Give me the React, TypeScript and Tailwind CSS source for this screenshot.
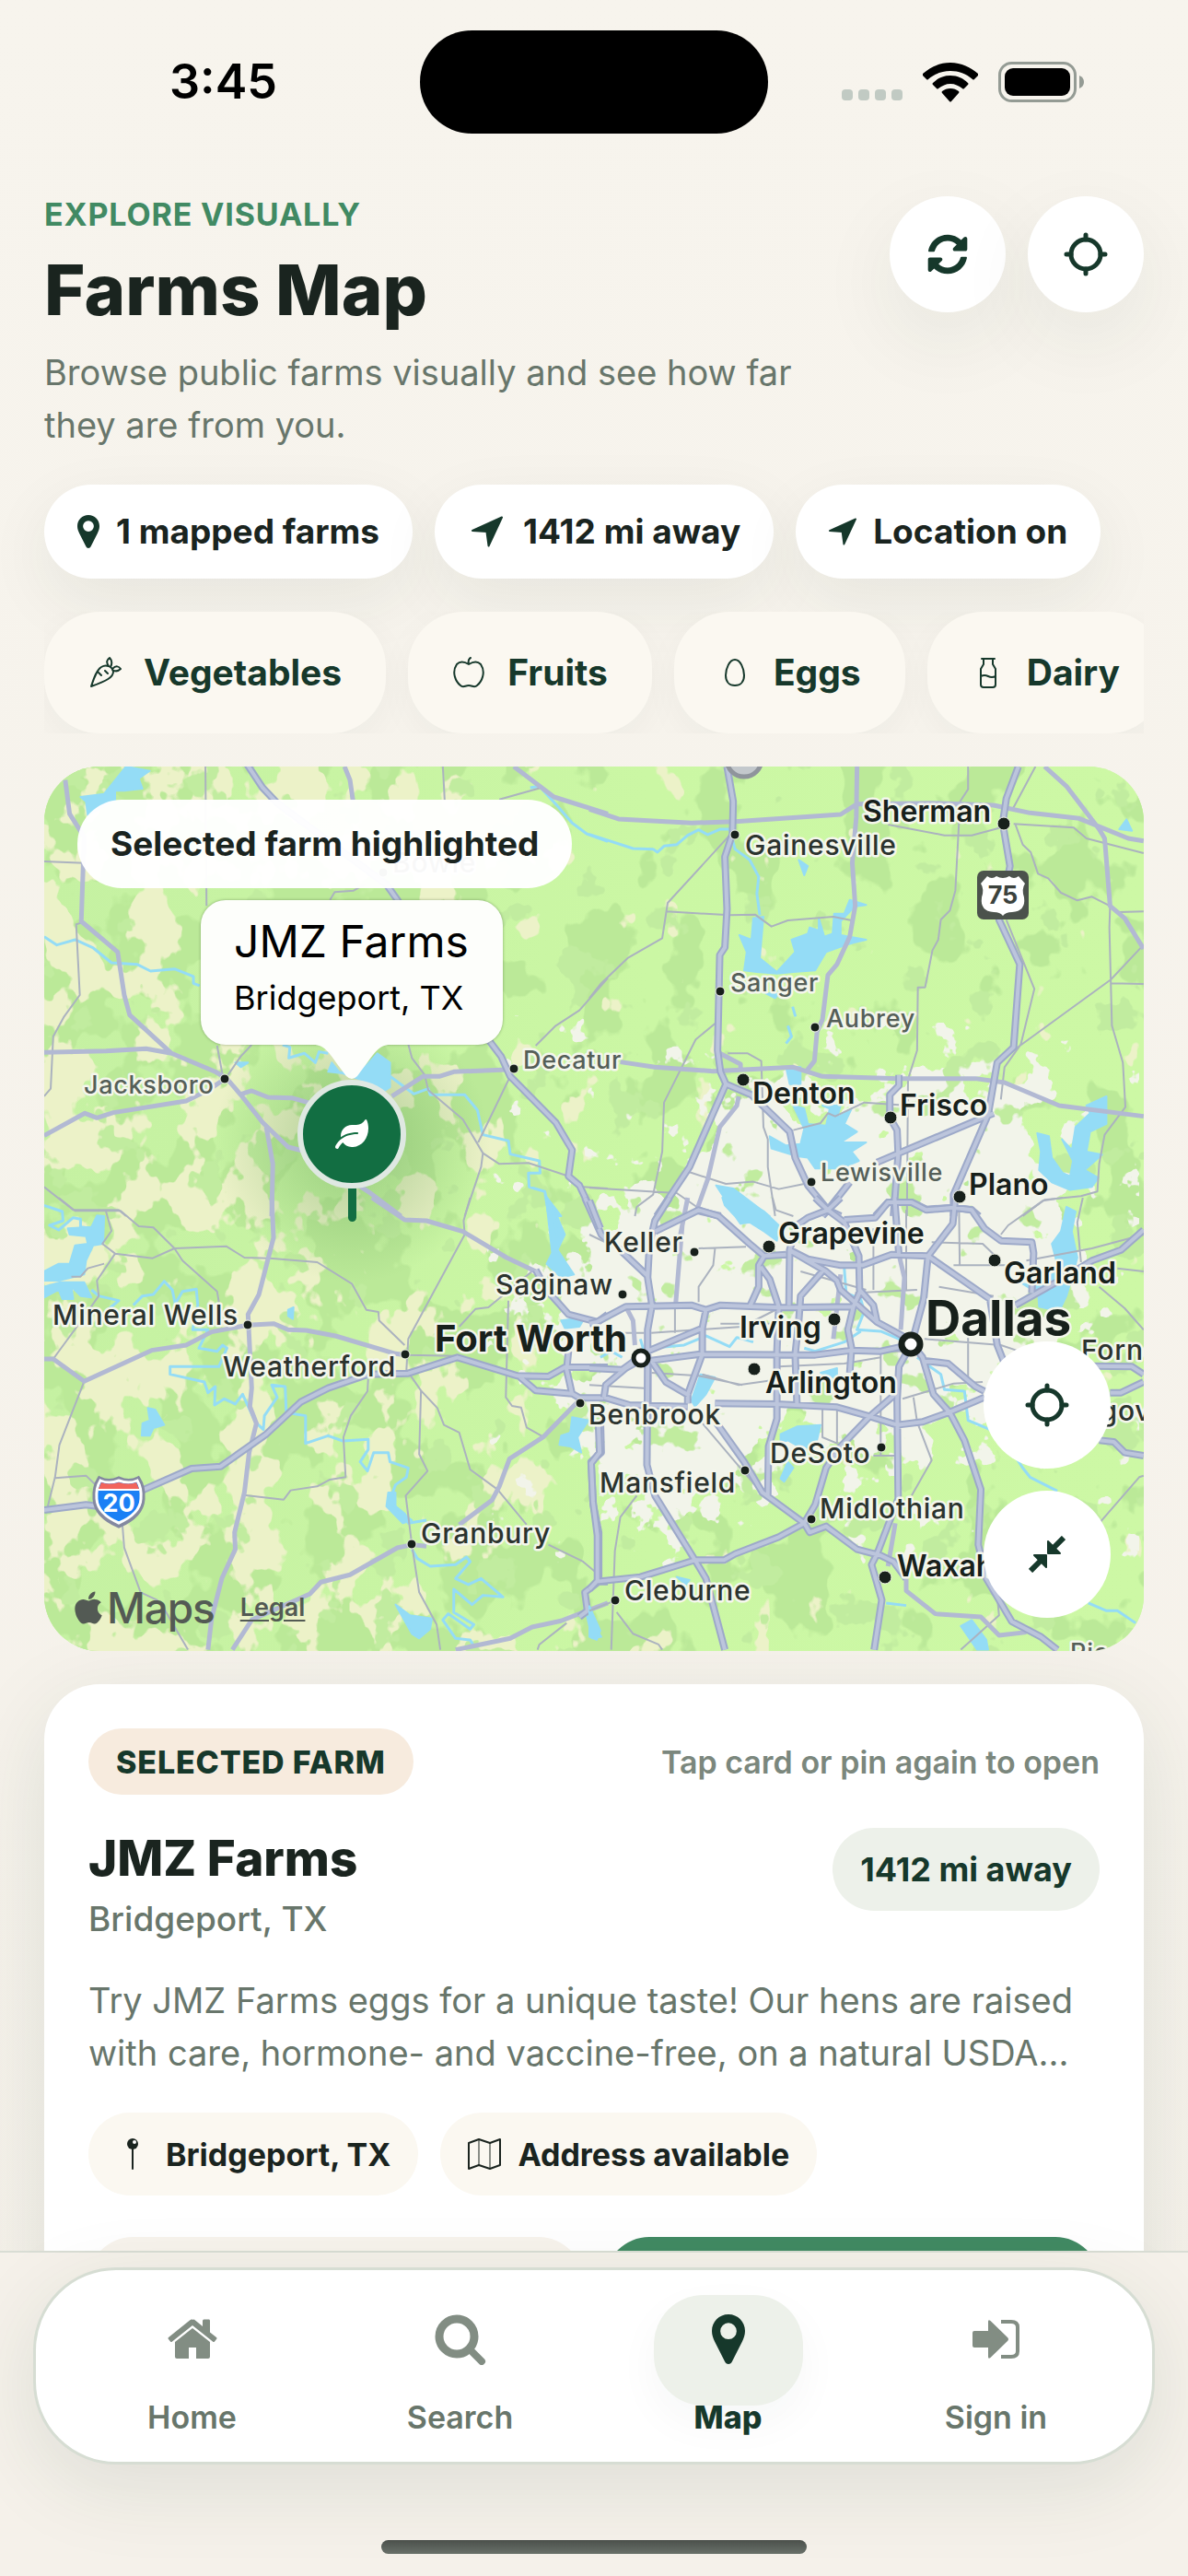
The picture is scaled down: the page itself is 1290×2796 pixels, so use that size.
import { useState } from "react";
import { FaApple, FaLeaf, FaSyncAlt } from "react-icons/fa";

interface Tile {
  x: number;
  y: number;
  highways: string;
  roads: string;
  streets: string;
  rivers: string;
  lakes: string;
}

interface City {
  name: string;
  x: number;
  y: number;
  dot?: [number, number];
  kind: "town" | "small" | "city" | "large" | "metro";
}

// The map is drawn as four tiles, each one in its own 1568x1500 space
const tiles: Tile[] = [
  {
    x: -8,
    y: -12,
    highways:
      "M578 30L620 105L660 155L960 420L990 470L1240 925L1275 980L1300 1045L1425 1195L1470 1285L1460 1370L1490 1400L1530 1500",
    roads:
      "M78 80L90 190L130 265L122 540L222 640L240 780L255 845L370 970L490 1030L520 1050L560 1105L620 1195L690 1275L740 1290L910 1420L1000 1500M20 967L190 962L300 955L370 970M20 1238L132 1165L165 1180L210 1163L410 1125L470 1090L518 1052M555 1105L590 1092L635 1113L700 1115L760 1135M630 1210L648 1330L645 1500M845 36L860 80L868 145M1310 36L1420 135L1568 190M975 1110L1060 1045L1105 1045L1145 1030L1290 1023",
    streets:
      "M463 36L466 490M20 345L130 350M122 545L108 550L118 780L75 850L45 915L38 1085L20 1110M1115 36L1120 145M1270 143L1385 105M510 1040L495 945M525 1040L560 980L590 942M1020 940L1030 985L1065 1040L1075 1090L1170 1185L1225 1295L1270 1330L1350 1327L1455 1368M1300 1045L1212 1260M1225 1295L1220 1340L1175 1500M1370 945L1425 880L1490 830L1568 725M20 1405L100 1480L225 1480L245 1500M805 470L818 445L870 440L900 420M1500 1405L1568 1410",
    rivers:
      "M20 590L55 617L105 600L155 627L205 675L275 680L312 702L378 695L430 720L430 742L447 750M675 942L695 950L692 985L735 970L765 1000L775 965L800 970M970 1045L1035 1102L1075 1085L1080 1105L1175 1105L1210 1155L1225 1235L1295 1255L1300 1298L1380 1320L1382 1360L1350 1360L1352 1405L1395 1420L1410 1500M1355 105L1380 100L1430 165L1470 220L1510 255L1568 280",
    lakes:
      "M245 36L310 50L280 75L290 108L240 115L215 115L215 145L140 195L135 150L120 135L185 125ZM810 1000L830 1030L870 1040L905 1010L935 970L970 1000L970 1080L945 1100L900 1060L840 1035L800 1030ZM545 1000L580 1000L560 1015ZM1395 1430L1440 1500L1405 1500Z",
  },
  {
    x: 592,
    y: -12,
    highways:
      "M378 36L395 150L393 255L372 330L378 500L372 625L358 650L352 960L360 1030L375 1070L275 1340L185 1500M375 1070L445 1105L550 1225L565 1310L600 1400L655 1480L690 1500M1178 36L1145 140L1135 220L1155 360L1125 535L1182 680L1165 950L1120 1000L1095 1170L1000 1430L1000 1500M850 1040L850 1075L825 1105L825 1180L845 1220L848 1300L835 1500M1110 1165L790 1325M785 1500L820 1455L885 1455L925 1478L1000 1472L1050 1480L1070 1500M715 1390L655 1480L640 1500M290 1480L360 1500",
    roads:
      "M0 175L80 207L280 220L400 215L690 192L735 158L940 155L1110 162L1210 187L1345 205L1480 270L1522 278M735 36L733 200L722 350L730 490L715 590L680 680L655 715L640 860L625 900L618 995L598 1025M1250 36L1310 100L1400 240L1415 270L1430 490L1470 530L1522 630M85 998L180 1015L340 1028L560 1015L640 1045L850 1052L1060 1052L1140 1065L1290 1140L1522 1175M410 1110L405 1140L358 1210L325 1380L295 1480M358 970L415 1005L415 1030M0 1450L15 1500",
    streets:
      "M385 260L215 480L200 595L105 660L30 745L0 790M212 508L385 520L455 518L500 557L545 537L670 525L720 537M348 870L292 925L205 1130L200 1290L175 1430L130 1470L125 1500M1040 36L1040 110L1018 150L1005 440L990 505L965 535L958 600L942 635L922 755L902 755L900 960L875 1055L872 1500M820 225L975 260L1050 260L1130 235M1165 223L1330 235L1365 270L1522 318M1170 225L1190 290L1212 315L1232 385L1260 400L1295 447L1340 472L1380 460L1430 490L1455 510L1522 508M1430 490L1428 560L1435 880L1465 1000L1472 1145L1415 1235L1400 1330L1395 1420L1350 1435L1250 1447L1190 1500M1145 535L1222 760L1185 940L1140 1015L1130 1120M1165 960L1432 730L1515 625M1432 742L1522 744M380 970L435 970L472 995L478 1210L490 1250L490 1340L510 1500M560 1220L635 1197L655 1165L675 1175L755 1130L850 1138M0 1408L240 1425L295 1470M275 1357L375 1395L450 1388L520 1412L590 1395M1225 36L1160 180",
    rivers:
      "M0 257L120 303L175 305L187 315L205 295L240 290L270 260L300 242L325 258L360 240L385 240L400 305L440 340L465 395L460 450L468 520M545 880L555 915L540 938M558 818L566 850",
    lakes:
      "M450 530L478 525L468 660L515 705L565 640L555 600L600 580L605 560L630 570L630 530L645 590L668 580L672 515L700 515L715 470L760 487L728 492L690 540L690 585L760 600L725 610L685 625L650 640L620 700L560 705L515 710L460 705L425 700L432 640L412 585L445 600ZM485 775L520 775L510 790ZM560 1140L590 1150L600 1200L650 1205L660 1150L640 1140L690 1140L680 1180L720 1150L700 1200L735 1225L690 1260L760 1260L720 1290L740 1320L690 1345L620 1345L600 1310L570 1305L500 1280L495 1240L540 1270L580 1265L590 1215ZM540 1015L580 1015L580 1070L550 1070ZM348 1400L395 1410L495 1500L440 1500L370 1440ZM1230 1230L1262 1240L1270 1310L1300 1360L1320 1370L1328 1320L1298 1250L1325 1285L1335 1210L1375 1165L1365 1140L1420 1110L1420 1200L1375 1225L1365 1290L1408 1300L1360 1350L1398 1375L1380 1405L1320 1415L1270 1390L1235 1350L1240 1290ZM1455 240L1475 208L1490 245ZM575 340L600 360L590 390Z",
  },
  {
    x: -8,
    y: 468,
    highways:
      "M20 1017L135 1000L170 1005L295 950L425 882L505 875L630 770L725 665L800 620L910 575L1020 572L1155 520L1320 580L1405 582L1450 552L1568 552M1325 582L1370 628L1470 638L1490 652L1568 652M1505 0L1550 120L1568 140M1460 500L1455 560L1470 640M1548 740L1550 830L1522 860L1528 1000L1543 1090L1543 1250L1505 1285L1512 1345L1490 1365M1543 1250L1568 1250M1370 235L1400 300L1460 380L1540 405L1568 380",
    roads:
      "M920 0L1010 72L1070 75L1170 110L1290 195L1370 240M645 0L650 130L610 315L580 380L590 620L585 680L603 735L583 830L570 960L543 1090L545 1145L508 1240L480 1370L470 1472M20 525L45 525L130 598L315 497L410 480L480 437L580 415L650 410L690 430L740 432L820 450L985 508L1012 512M537 1472L590 1375L750 1290L780 1252L860 1228L990 1140L1030 1130L1070 1135M1160 1065L1250 985L1270 940L1298 850L1390 780L1485 665M1150 1472L1300 1435L1360 1398L1440 1378L1500 1350L1568 1320",
    streets:
      "M60 0L105 43L230 43L280 93L320 97L378 165L520 158L570 195L640 197L770 210L865 280L905 365L938 372L940 400L1010 480M378 165L318 197L215 182L180 150L205 108L190 45M215 182L165 270L170 320L110 420L45 525M378 165L400 205L495 305L500 340M185 215L140 230L120 257L95 257M130 598L62 805L50 910L30 1005M50 913L135 905L170 945M235 1065L240 1140L285 1285L330 1310L350 1340L415 1472M1190 0L1172 75L1175 120L1020 460L1015 560L1055 628L1050 835L1073 890L1013 970L1030 1130L1050 1285L1098 1390L1108 1472M1020 512L1150 515M1055 628L1100 685L1118 740L1160 765L1190 885L1265 950L1345 1065M1405 1130L1500 1185L1540 1225M910 590L908 630L862 710L842 780L848 910L805 918L770 940L697 953L678 983L568 968M1160 420L1205 362L1240 357L1365 235M1295 335L1288 650L1305 678L1330 683L1345 748L1390 778M1455 1385L1380 1455L1375 1472",
    rivers:
      "M265 350L290 320L320 315L350 272L372 300L380 345L400 305L438 298L442 350L428 430L470 430L445 490L495 500L510 480L522 490L500 550L366 550L366 575L460 600L470 635L490 615L488 675L515 655L545 672L565 640L600 730L622 755L625 710L660 650L645 610L682 615L685 700L738 710L738 800L800 775L840 792L910 787L910 820L888 860L908 890L925 830L965 830L970 860L1020 880L1015 910L985 935L968 990L1010 1030L1020 1060L1070 1050M1030 1145L1045 1175L1080 1200L1150 1195L1180 1170L1190 1185L1150 1240L1185 1260L1220 1240L1280 1300L1225 1295L1195 1325L1145 1275L1145 1350L1200 1390L1190 1405L1130 1355L1115 1375L1150 1435L1190 1440L1200 1460M20 25L70 45L72 75L35 90L60 105L100 65L120 70L120 95L150 100M1400 0L1420 60L1430 130M150 300L170 320L225 335L200 360",
    lakes:
      "M165 58L185 60L182 150L155 155L135 205L130 250L60 270L20 270L20 240L60 215L90 215L105 155L140 150L135 125L90 120L85 100L150 95ZM20 290L65 275L130 275L150 325L120 320L95 290L100 330L70 330L60 300L20 325ZM305 685L325 690L350 740L320 750L310 775L288 775L290 735L310 725ZM1400 20L1425 50L1450 120L1430 170L1455 215L1475 250L1440 260L1400 215L1415 180ZM690 365L705 357L703 395L690 385ZM1470 715L1515 725L1485 780L1495 830L1465 810L1435 805L1440 775L1465 765ZM985 1325L1025 1360L1085 1370L1080 1405L1050 1435L1030 1420ZM1440 400L1505 390L1490 420L1450 425ZM1510 1360L1550 1430L1525 1435ZM965 960L985 960L985 1010L1030 1050L1005 1060L960 1005Z",
  },
  {
    x: 592,
    y: 468,
    highways:
      "M0 10L30 100M220 0L180 75L165 150L160 260L172 350L160 430L160 530L158 870L180 970L290 1180L320 1240L372 1472M80 165L160 255M180 110L300 40L355 60L440 150L480 190L540 185M548 170L650 240L680 270L690 300L790 405L860 450L885 475M0 410L20 405L100 355L280 350L320 365L360 350L525 358L725 355M620 0L655 40L700 80L740 190L742 300L780 350L790 405M690 0L655 40L600 65L570 90L550 170L548 350M480 190L465 220L465 290L440 355M470 225L495 265L520 355L515 500L515 720L492 810L490 970M700 72L785 65L820 15L885 15L925 40L1000 32L1050 40L1085 100L1130 140L1215 145L1220 180L1215 310M838 0L850 185M1005 0L998 85L930 190L918 330L885 475L850 550L845 660L848 980L790 1160L775 1195L803 1310L782 1472M550 170L600 200L690 220L750 220L830 185L930 190L1100 330L1120 480L1140 540M1522 105L1460 170L1380 205L1290 270L1170 350M640 240L580 320L575 400L565 510L570 670M745 300L725 355L710 430L720 490L715 570M170 530L300 510L620 512L720 497L800 500L885 478M0 555L90 560L160 500L310 425L320 365M310 425L310 510L270 640L270 670M170 530L210 600L275 645M345 670L515 672L680 682L770 712L845 740L915 730L990 698L1085 650M885 475L915 520L945 640L990 700L1030 790L1075 950L1068 1130L1090 1240L1160 1380L1240 1430L1285 1472M915 530L985 540L1060 615L1085 630M1380 548L1490 550L1522 575M1430 635L1460 635L1522 600M1400 790L1440 795L1470 830L1522 840M840 640L770 712L690 810L650 880L620 1000L590 1060M350 735L425 860L475 960L590 1060L605 1090L650 1070L735 1145L800 1165L835 1185L870 1240M590 1060L520 1105L400 1160L370 1180L290 1180L140 1235L20 1250L0 1275M25 740L28 830L5 865L10 990L22 1100L22 1250M40 650L45 610L100 555L145 525M40 650L110 675L270 680",
    roads:
      "M870 1240L870 1280L950 1355L1075 1365L1125 1425L1200 1415M255 90L237 345M850 185L865 260L855 430M165 530L165 720M270 0L250 120M100 355L120 400L125 480M840 1060L820 1200M670 460L690 250",
    streets:
      "M503 0L512 40L560 60M0 120L70 160L115 165M345 165L340 220L300 290L300 340M1015 30L1017 220M300 165L430 160M940 145L1080 150L1115 190M1000 220L1180 220M960 290L1110 320M730 310L900 300M1040 440L1040 600M920 460L1130 480L1180 500M870 40L870 300M310 575L410 610L500 595M170 570L300 580L420 610M640 670L640 780L680 800L680 680M800 510L800 840M890 650L900 730L940 855L885 970M860 655L1000 605L1080 600M1130 120L1150 90L1245 10L1300 0M1355 0L1340 80L1350 210M1200 205L1380 165L1522 120M1400 290L1470 360L1522 430M1400 1060L1510 910L1522 905M300 720L400 860L480 970M130 970L85 1040L70 1150L60 1472M75 1350L120 1420L190 1455L200 1472M0 1345L75 1310M170 440L420 420L520 360M0 440L150 440M235 340L235 440M360 410L520 410M0 610L150 620M1020 1472L1125 1360L1120 1300M640 500L900 500M1450 230L1522 240M780 840L840 840M520 550L700 540L800 520M780 100L780 300M580 240L760 300",
    rivers:
      "M700 230L705 310L745 330L755 370L735 430L800 435L870 470M170 490L260 480L320 450L385 485L405 455L450 470M745 435L700 470L620 500L590 490M900 520L965 575L975 625L1030 630L1040 725L1130 770L1190 880L1210 910L1285 955M1370 1320L1420 1345L1450 1345L1500 1385M815 1320L870 1328M30 520L60 500L90 520M140 460L150 500",
    lakes:
      "M365 0L410 0L480 45L520 90L515 140L480 110L440 80L415 85L400 60L372 25ZM1310 30L1335 45L1325 110L1340 195L1330 240L1310 320L1290 370L1235 355L1230 270L1290 240L1270 150L1295 110ZM525 770L570 745L635 740L625 790L590 820L545 790L525 800ZM305 575L345 585L320 640L290 680L280 660ZM1050 1375L1090 1440L1095 1472L1065 1472L1020 1395ZM635 570L680 555L680 590ZM0 1330L30 1410L20 1440L0 1430ZM545 860L560 880L535 925L525 915ZM240 1235L275 1245L265 1260ZM1190 280L1235 290L1230 310Z",
  },
];

const cities: City[] = [
  { name: "Bowie", x: 378, y: 115, dot: [368, 115], kind: "town" },
  { name: "Sherman", x: 889, y: 60, dot: [1042, 62], kind: "city" },
  { name: "Gainesville", x: 761, y: 96, dot: [750, 74], kind: "town" },
  { name: "Sanger", x: 745, y: 244, dot: [734, 244], kind: "small" },
  { name: "Aubrey", x: 849, y: 283, dot: [837, 283], kind: "small" },
  { name: "Denton", x: 769, y: 366, dot: [759, 340], kind: "city" },
  { name: "Frisco", x: 929, y: 379, dot: [919, 381], kind: "city" },
  { name: "Lewisville", x: 843, y: 450, dot: [833, 451], kind: "small" },
  { name: "Plano", x: 1004, y: 465, dot: [994, 467], kind: "city" },
  { name: "Decatur", x: 520, y: 328, dot: [510, 328], kind: "small" },
  { name: "Jacksboro", x: 43, y: 355, dot: [196, 339], kind: "small" },
  { name: "Mineral Wells", x: 9, y: 606, dot: [221, 606], kind: "town" },
  { name: "Weatherford", x: 194, y: 662, dot: [392, 638], kind: "town" },
  { name: "Fort Worth", x: 424, y: 635, kind: "large" },
  { name: "Saginaw", x: 490, y: 573, dot: [628, 573], kind: "town" },
  { name: "Benbrook", x: 591, y: 714, dot: [582, 691], kind: "town" },
  { name: "Granbury", x: 409, y: 843, dot: [399, 844], kind: "town" },
  { name: "Keller", x: 608, y: 527, dot: [706, 527], kind: "town" },
  { name: "Grapevine", x: 797, y: 518, dot: [787, 521], kind: "city" },
  { name: "Garland", x: 1042, y: 561, dot: [1032, 536], kind: "city" },
  { name: "Irving", x: 755, y: 620, dot: [858, 600], kind: "city" },
  { name: "Dallas", x: 957, y: 618, kind: "metro" },
  { name: "Forney", x: 1126, y: 644, kind: "town" },
  { name: "Seagoville", x: 1090, y: 710, kind: "town" },
  { name: "Arlington", x: 783, y: 680, dot: [771, 654], kind: "city" },
  { name: "DeSoto", x: 788, y: 756, dot: [909, 739], kind: "town" },
  { name: "Mansfield", x: 603, y: 788, dot: [761, 764], kind: "town" },
  { name: "Midlothian", x: 842, y: 816, dot: [833, 817], kind: "town" },
  { name: "Waxahachie", x: 926, y: 879, dot: [913, 880], kind: "city" },
  { name: "Cleburne", x: 630, y: 905, dot: [620, 905], kind: "town" },
  { name: "Rice", x: 1114, y: 971, kind: "small" },
];

const cityStyles = {
  small: "fill-[#555f58] text-[27px] font-medium tracking-wide",
  town: "fill-[#2b332e] text-[30px] font-medium tracking-wide",
  city: "fill-[#17201b] text-[32px] font-semibold",
  large: "fill-[#17201b] text-[40px] font-bold",
  metro: "fill-[#17201b] text-[53px] font-bold",
};

function MapCanvas() {
  return (
    <svg
      className="absolute inset-0 h-full w-full"
      viewBox="0 0 1194 960"
      preserveAspectRatio="xMidYMid slice"
      role="img"
      aria-label="Map of the Dallas and Fort Worth area"
    >
      <defs>
        <linearGradient id="base">
          <stop offset="0" stopColor="#c5f1a2" />
          <stop offset="0.55" stopColor="#cbf7a4" />
          <stop offset="1" stopColor="#cdf8a5" />
        </linearGradient>
        <linearGradient id="west">
          <stop offset="0" stopColor="#fff" stopOpacity="1" />
          <stop offset="0.3" stopColor="#fff" stopOpacity="0.85" />
          <stop offset="0.55" stopColor="#fff" stopOpacity="0.3" />
          <stop offset="1" stopColor="#fff" stopOpacity="0.1" />
        </linearGradient>
        <radialGradient id="halo">
          <stop offset="0" stopColor="#5f9c50" stopOpacity="0.45" />
          <stop offset="1" stopColor="#5f9c50" stopOpacity="0" />
        </radialGradient>
        {/* noise cut at a threshold gives the ragged field edges */}
        <filter id="woods" x="0" y="0" width="1" height="1" colorInterpolationFilters="sRGB">
          <feTurbulence type="fractalNoise" baseFrequency="0.014 0.012" numOctaves="4" seed="8" />
          <feComposite in2="SourceGraphic" operator="arithmetic" k2="1" k3="0.14" />
          <feColorMatrix values="0 0 0 0 0.735 0 0 0 0 0.915 0 0 0 0 0.597 0 0 0 30 -18.2" />
        </filter>
        <filter id="fields" x="0" y="0" width="1" height="1" colorInterpolationFilters="sRGB">
          <feTurbulence type="fractalNoise" baseFrequency="0.02 0.016" numOctaves="4" seed="21" />
          <feComposite in2="SourceGraphic" operator="arithmetic" k2="1" k3="0.3" />
          <feColorMatrix values="0 0 0 0 0.925 0 0 0 0 0.949 0 0 0 0 0.784 0 0 0 30 -23.900" />
        </filter>
        <filter id="urban" x="-0.1" y="-0.1" width="1.2" height="1.2" colorInterpolationFilters="sRGB">
          <feGaussianBlur in="SourceGraphic" stdDeviation="34" result="soft" />
          <feTurbulence type="fractalNoise" baseFrequency="0.03" numOctaves="4" seed="5" />
          <feComposite in2="soft" operator="arithmetic" k2="1" k3="0.5" />
          <feColorMatrix values="0 0 0 0 0.949 0 0 0 0 0.957 0 0 0 0 0.918 0 0 0 30 -21.500" />
        </filter>
        <filter id="parks" x="0" y="0" width="1" height="1" colorInterpolationFilters="sRGB">
          <feTurbulence type="fractalNoise" baseFrequency="0.02" numOctaves="4" seed="33" />
          <feColorMatrix values="0 0 0 0 0.757 0 0 0 0 0.925 0 0 0 0 0.624 0 0 0 30 -19.500" />
        </filter>
      </defs>

      <rect width="1194" height="960" fill="url(#base)" />
      <rect width="1194" height="960" fill="url(#west)" filter="url(#woods)" />
      <rect width="1194" height="960" fill="url(#west)" filter="url(#fields)" />
      <g fill="#fff" filter="url(#urban)">
        <path d="M600 470L700 440L740 350L800 330L850 400L920 330L1050 320L1090 430L1130 520L1110 640L1000 690L930 760L800 700L760 800L640 820L600 700L540 660L560 560Z" />
      </g>
      <rect width="1194" height="960" filter="url(#parks)" />
      <circle cx="334" cy="410" r="150" fill="url(#halo)" />

      {tiles.map((tile) => (
        <g
          key={tile.highways}
          transform={`translate(${tile.x} ${tile.y}) scale(0.3954 0.3333)`}
          fill="none"
          strokeLinejoin="round"
          className="[&_path]:[vector-effect:non-scaling-stroke]"
        >
          <path d={tile.lakes} fill="#94dcf6" stroke="#94dcf6" strokeWidth="2" />
          <path d={tile.rivers} stroke="#94dcf6" strokeWidth="3" />
          <path d={tile.streets} stroke="#abb2bf" strokeWidth="2" />
          <path d={tile.roads} stroke="#b2b9d3" strokeWidth="5" />
          <path d={tile.highways} stroke="#9da9c9" strokeWidth="8" />
          <path d={tile.highways} stroke="#bcc5dc" strokeWidth="4" />
        </g>
      ))}

      <circle cx="760" cy="-8" r="19" fill="#c3c8cc" stroke="#8f949c" strokeWidth="5" />

      {cities.map((city) => (
        <g key={city.name}>
          {city.dot && (
            <circle
              cx={city.dot[0]}
              cy={city.dot[1]}
              r={city.kind === "city" ? 7 : 5}
              fill="#17201b"
              stroke="#f4f6ec"
              strokeWidth="1"
            />
          )}
          <text
            x={city.x}
            y={city.y}
            className={cityStyles[city.kind]}
            stroke="#f4f6ec"
            strokeWidth="5"
            strokeLinejoin="round"
            paintOrder="stroke"
          >
            {city.name}
          </text>
        </g>
      ))}
      <circle cx="648" cy="642" r="8" fill="#fff" stroke="#17201b" strokeWidth="5" />
      <circle cx="941" cy="627" r="10" fill="#fff" stroke="#17201b" strokeWidth="7" />

      {/* US 75 */}
      <rect x="1013" y="113" width="56" height="53" rx="7" fill="#4b524c" />
      <path
        d="M1024 119Q1029 123 1034 119Q1041 123 1048 119Q1053 123 1058 119L1065 127Q1061 133 1064 142Q1066 157 1051 158Q1044 158 1041 162Q1038 158 1031 158Q1016 157 1018 142Q1021 133 1017 127Z"
        fill="#fff"
      />
      <text x="1041" y="149" textAnchor="middle" className="fill-[#3b423d] text-[27px] font-bold">
        75
      </text>

      {/* Interstate 20 */}
      <path
        d="M60 773Q70 778 81 773Q92 778 102 773Q108 782 107 795Q106 813 81 824Q56 813 55 795Q54 782 60 773Z"
        fill="#1a80f5"
        stroke="#8489a0"
        strokeWidth="5"
      />
      <path
        d="M61 775Q70 779 81 775Q92 779 101 775Q106 783 105 795Q104 811 81 821Q58 811 57 795Q56 783 61 775Z"
        fill="#1a80f5"
        stroke="#fff"
        strokeWidth="3"
      />
      <path d="M62 777Q70 780 81 777Q92 780 100 777L103 784H59Z" fill="#f2645c" />
      <path d="M59 785H103" stroke="#fff" strokeWidth="2" />
      <text x="81" y="809" textAnchor="middle" className="fill-white text-[27px] font-bold">
        20
      </text>
    </svg>
  );
}

/* icons */
function PinIcon({ className }: { className?: string }) {
  return (
    <svg viewBox="0 0 24 36" className={className} fill="currentColor" aria-hidden="true">
      <path
        fillRule="evenodd"
        d="M12 0C5.200 0 0 5.300 0 12C0 15 1 17.500 2.200 20L9.300 34C10.300 36.600 13.700 36.600 14.700 34L21.800 20C23 17.500 24 15 24 12C24 5.300 18.800 0 12 0ZM12 6.200A5.900 5.900 0 1 1 12 18A5.900 5.900 0 1 1 12 6.200Z"
      />
    </svg>
  );
}

function ArrowIcon({ className }: { className?: string }) {
  return (
    <svg viewBox="2 2 33 32" className={className} fill="currentColor" stroke="currentColor" strokeWidth="2" strokeLinejoin="round" aria-hidden="true">
      <path d="M3 17L34 3L20 33L18 18Z" />
    </svg>
  );
}

function CrosshairIcon() {
  return (
    <svg viewBox="0 0 48 48" className="size-12" fill="none" stroke="currentColor" strokeWidth="5" strokeLinecap="round" aria-hidden="true">
      <circle cx="24" cy="24" r="16" />
      <path d="M24 3V8M24 40V45M3 24H8M40 24H45" />
    </svg>
  );
}

function CollapseIcon() {
  return (
    <svg viewBox="0 0 40 40" className="size-10" fill="currentColor" stroke="currentColor" strokeLinejoin="round" aria-hidden="true">
      <path strokeWidth="2" d="M21 6V19H34ZM19 34V21H6Z" />
      <path strokeWidth="6" d="M26 14L38 2M14 26L2 38" />
    </svg>
  );
}

function CarrotIcon() {
  return (
    <svg viewBox="0 0 36 36" className="size-9" fill="none" stroke="currentColor" strokeWidth="2" strokeLinecap="round" strokeLinejoin="round" aria-hidden="true">
      <path d="M3 33C6 24 9 15 14 12C19 9 26 11 27 17C27 23 20 27 3 33ZM11 18L14 21M18 16L21 19M22 11C19 7 20 4 23 2C26 5 26 8 24 12M26 14C30 10 33 11 35 14C32 17 29 17 26 15" />
    </svg>
  );
}

function AppleIcon() {
  return (
    <svg viewBox="0 0 36 36" className="size-9" fill="none" stroke="currentColor" strokeWidth="2" strokeLinecap="round" strokeLinejoin="round" aria-hidden="true">
      <path d="M18 9C13 6 8 6 5 9C-1 18 4 28 9 32C12 35 14 32 18 32C22 32 24 35 27 32C32 28 37 18 31 9C28 6 23 6 18 9ZM18 9C17 5 18 3 20 2" />
    </svg>
  );
}

function EggIcon() {
  return (
    <svg viewBox="0 0 36 36" className="size-9" fill="none" stroke="currentColor" strokeWidth="2" aria-hidden="true">
      <path d="M18 4C12 4 8 14 8 21C8 28 12 32 18 32C24 32 28 28 28 21C28 14 24 4 18 4Z" />
    </svg>
  );
}

function MilkIcon() {
  return (
    <svg viewBox="0 0 36 36" className="size-9" fill="none" stroke="currentColor" strokeWidth="2" strokeLinecap="round" strokeLinejoin="round" aria-hidden="true">
      <path d="M11 3H25M13 3V9L10 14V31Q10 34 13 34H23Q26 34 26 31V14L23 9V3M10 22Q14 20 18 22T26 22" />
    </svg>
  );
}

function PushpinIcon() {
  return (
    <svg viewBox="0 0 36 36" className="size-9" aria-hidden="true">
      <path d="M18 9V34" stroke="currentColor" strokeWidth="2" strokeLinecap="round" />
      <circle cx="18" cy="7" r="6" fill="currentColor" />
      <circle cx="20" cy="5" r="2" fill="#fff" />
    </svg>
  );
}

function FoldedMapIcon() {
  return (
    <svg viewBox="0 0 36 36" className="size-9" fill="none" stroke="currentColor" strokeWidth="2" strokeLinejoin="round" aria-hidden="true">
      <path d="M1 6L12 2L24 6L35 2V30L24 34L12 30L1 34Z" />
      <path strokeWidth="1" d="M12 2V30M24 6V34" />
    </svg>
  );
}

function HomeIcon() {
  return (
    <svg viewBox="0 0 54 54" className="size-[54px]" fill="currentColor" aria-hidden="true">
      <path d="M27 15L46 30V46Q46 48 44 48H31V36H23V48H10Q8 48 8 46V30Z" />
      <path d="M27 6Q28.500 5 30 6.500L38 13V7Q38 5.500 39.500 5.500H45Q46 5.500 46 7V19.500L53 25Q54 26 53 27L51 29.500Q50 30.500 49 29.500L27 12L5 29.500Q4 30.500 3 29.500L1 27Q0 26 1 25L24 6.500Q25.500 5 27 5.500Z" />
    </svg>
  );
}

function SearchIcon() {
  return (
    <svg viewBox="0 0 56 56" className="size-14" fill="none" stroke="currentColor" strokeLinecap="round" aria-hidden="true">
      <circle cx="24" cy="25" r="19" strokeWidth="9" />
      <path d="M39 40L51 52" strokeWidth="8" />
    </svg>
  );
}

function SignInIcon() {
  return (
    <svg viewBox="0 0 54 54" className="size-[54px]" aria-hidden="true">
      <path d="M3 18Q1 18 1 20V34Q1 36 3 36H18V46Q18 49 20.500 47L39 29Q41 27 39 25L20.500 7Q18 5 18 8V18Z" fill="currentColor" />
      <path d="M32 8H43Q50 8 50 14V40Q50 46 43 46H32" fill="none" stroke="currentColor" strokeWidth="4" />
    </svg>
  );
}

const stats = [
  { label: "1 mapped farms", icon: <PinIcon className="h-9 w-6" /> },
  { label: "1412 mi away", icon: <ArrowIcon className="size-[42px] p-1" /> },
  { label: "Location on", icon: <ArrowIcon className="size-[30px]" /> },
];

const categories = [
  { label: "Vegetables", icon: <CarrotIcon /> },
  { label: "Fruits", icon: <AppleIcon /> },
  { label: "Eggs", icon: <EggIcon /> },
  { label: "Dairy", icon: <MilkIcon /> },
];

const tabs = [
  { label: "Home", icon: <HomeIcon /> },
  { label: "Search", icon: <SearchIcon /> },
  { label: "Map", icon: <PinIcon className="h-[54px] w-9" /> },
  { label: "Sign in", icon: <SignInIcon /> },
];

function StatusBar() {
  return (
    <div className="grid h-[177px] shrink-0 grid-cols-[1fr_378px_1fr] pt-[33px]">
      <div className="flex h-28 items-center pl-[184px] text-[52px] font-semibold text-black">3:45</div>
      <div className="h-28 rounded-full bg-black" />
      <div className="flex h-28 items-center justify-end gap-[22px] pr-28">
        <div className="flex gap-[6px] pt-[28px]">
          <span className="h-3 w-3 rounded-[4px] bg-[#c1cac3]" />
          <span className="h-3 w-3 rounded-[4px] bg-[#c1cac3]" />
          <span className="h-3 w-3 rounded-[4px] bg-[#c1cac3]" />
          <span className="h-3 w-3 rounded-[4px] bg-[#c1cac3]" />
        </div>
        <svg viewBox="0 0 60 43" className="h-[43px] w-[60px]" aria-hidden="true">
          <path d="M30 0C42 0 52 5 60 12Q61 13 60 14L56 18Q55 19 54 18C47 12 39 9 30 9S13 12 6 18Q5 19 4 18L0 14Q-1 13 0 12C8 5 18 0 30 0Z" />
          <path d="M30 14C38 14 44 17 49 22Q50 23 49 24L45 28Q44 29 43 28C39 25 35 23 30 23S21 25 17 28Q16 29 15 28L11 24Q10 23 11 22C16 17 22 14 30 14Z" />
          <path d="M30 28C34 28 36 29 39 31Q40 32 39 33L31 42Q30 43 29 42L21 33Q20 32 21 31C24 29 26 28 30 28Z" />
        </svg>
        <svg viewBox="0 0 94 44" className="h-11 w-[94px]" aria-hidden="true">
          <rect x="1.500" y="1.500" width="82" height="41" rx="13" fill="none" stroke="#949b94" strokeWidth="3" />
          <rect x="7" y="7" width="71" height="30" rx="9" />
          <path d="M88 15Q93 17 93 22T88 29Z" fill="#949b94" />
        </svg>
      </div>
    </div>
  );
}

function RoundButton({ label, className, children }: { label: string; className: string; children: React.ReactNode }) {
  return (
    <button
      type="button"
      aria-label={label}
      className={`flex shrink-0 items-center justify-center rounded-full bg-white text-[#16382b] ${className}`}
    >
      {children}
    </button>
  );
}

export default function App() {
  const [activeTab, setActiveTab] = useState("Map");

  return (
    <div className="flex h-screen w-full flex-col overflow-hidden bg-linear-to-b from-[#f7f4ed] to-[#f5f1ea] font-['Inter',sans-serif] text-[#1a241f]">
      <StatusBar />

      <main className="flex min-h-0 flex-1 flex-col gap-9 overflow-hidden px-12 pt-9">
        {/* Header */}
        <header className="flex shrink-0 items-start justify-between gap-9">
          <div className="flex max-w-[830px] flex-col gap-3">
            <p className="text-[34px] leading-10 font-bold tracking-wide text-[#418a63]">EXPLORE VISUALLY</p>
            <h1 className="text-[76px] leading-[99px] font-extrabold">Farms Map</h1>
            <p className="text-[38px] leading-[57px] text-[#68766b]">
              Browse public farms visually and see how far they are from you.
            </p>
          </div>
          <div className="flex gap-6">
            <RoundButton label="Refresh" className="size-[126px] shadow-[0_30px_90px_rgba(22,56,43,0.07)]">
              <FaSyncAlt className="size-[44px]" />
            </RoundButton>
            <RoundButton label="Locate me" className="size-[126px] shadow-[0_30px_90px_rgba(22,56,43,0.07)]">
              <CrosshairIcon />
            </RoundButton>
          </div>
        </header>

        {/* Stats */}
        <ul className="flex shrink-0 gap-6">
          {stats.map((stat) => (
            <li
              key={stat.label}
              className="flex h-[102px] items-center gap-[18px] rounded-full bg-white px-9 text-[37px] font-bold whitespace-nowrap shadow-[0_24px_72px_rgba(22,56,43,0.07)]"
            >
              <span className="text-[#16382b]">{stat.icon}</span>
              {stat.label}
            </li>
          ))}
        </ul>

        {/* Categories */}
        <div className="flex shrink-0 gap-6 overflow-hidden">
          {categories.map((category) => (
            <button
              key={category.label}
              type="button"
              className="flex h-[132px] shrink-0 items-center gap-6 rounded-[60px] bg-[#fbf8f1] px-12 text-[39px] font-bold text-[#16382b] shadow-[0_12px_40px_rgba(22,56,43,0.04)]"
            >
              {category.icon}
              {category.label}
            </button>
          ))}
        </div>

        {/* Map */}
        <section className="relative h-[960px] shrink-0 overflow-hidden rounded-[60px] bg-[#c9f5a3]">
          <MapCanvas />

          <p className="absolute top-9 left-9 flex h-24 items-center rounded-full bg-white/97 px-9 text-[37px] font-bold">
            Selected farm highlighted
          </p>

          <div className="absolute top-[145px] left-[170px] flex w-[328px] flex-col items-center">
            <div className="w-full rounded-[27px] bg-[#fdfefb] px-9 pt-3 pb-[22px] text-black shadow-[0_0_3px_rgba(60,90,50,0.5)]">
              <p className="text-[48px] leading-[66px] whitespace-nowrap">JMZ Farms</p>
              <p className="text-[36px] leading-[57px] whitespace-nowrap">Bridgeport, TX</p>
            </div>
            <svg viewBox="0 0 84 38" className="h-[38px] w-[84px]" aria-hidden="true">
              <path d="M0 0C14 0 16 8 36 34Q42 40 48 34C68 8 70 0 84 0Z" fill="#fdfefb" />
            </svg>
            <div className="flex size-[118px] items-center justify-center rounded-full border-[6px] border-[#dfe8e2] bg-[#126e42] text-white">
              <FaLeaf className="size-9" />
            </div>
            <div className="h-9 w-[9px] rounded-b-full bg-[#126e42]" />
          </div>

          <div className="absolute bottom-5 left-7 flex items-center gap-7 text-[#535a54]">
            <span className="flex items-center text-[46px] leading-[54px] font-medium tracking-tight">
              <FaApple className="size-10" />
              Maps
            </span>
            <a href="#legal" className="text-[27px] font-semibold underline underline-offset-4">
              Legal
            </a>
          </div>

          <div className="absolute right-9 bottom-9 flex flex-col gap-6">
            <RoundButton label="Center on my location" className="size-[138px]">
              <CrosshairIcon />
            </RoundButton>
            <RoundButton label="Collapse map" className="size-[138px]">
              <CollapseIcon />
            </RoundButton>
          </div>
        </section>

        {/* Selected farm */}
        <article className="flex shrink-0 flex-col gap-9 rounded-[60px] bg-white p-12 shadow-[0_24px_96px_rgba(22,56,43,0.1)]">
          <div className="flex items-center justify-between">
            <span className="flex h-[72px] items-center rounded-full bg-[#f7ebde] px-[30px] text-[34px] font-extrabold tracking-wide text-[#16382b]">
              SELECTED FARM
            </span>
            <span className="text-[34px] font-semibold text-[#7b877d]">Tap card or pin again to open</span>
          </div>
          <div className="flex items-start justify-between">
            <div className="flex flex-col gap-[9px]">
              <h2 className="text-[53px] leading-[66px] font-extrabold">JMZ Farms</h2>
              <p className="text-[37px] leading-[48px] font-medium text-[#68766b]">Bridgeport, TX</p>
            </div>
            <span className="flex h-[90px] items-center rounded-full bg-[#edf1ea] px-[30px] text-[36px] font-bold text-[#16382b]">
              1412 mi away
            </span>
          </div>
          <p className="line-clamp-2 text-[38px] leading-[57px] text-[#68766b]">
            Try JMZ Farms eggs for a unique taste! Our hens are raised with care, hormone- and vaccine-free, on a natural
            USDA...
          </p>
          <div className="flex gap-6 text-[34px] font-bold">
            <span className="flex h-[90px] items-center gap-[18px] rounded-full bg-[#fbf8f1] px-[30px]">
              <PushpinIcon />
              Bridgeport, TX
            </span>
            <span className="flex h-[90px] items-center gap-[18px] rounded-full bg-[#fbf8f1] px-[30px]">
              <FoldedMapIcon />
              Address available
            </span>
          </div>
          <div className="grid grid-cols-2 gap-6 pt-[9px]">
            <button type="button" aria-label="Directions" className="h-[138px] rounded-[48px] bg-[#f7f3ec]" />
            <button type="button" aria-label="Open farm" className="h-[138px] rounded-[48px] bg-[#418a63]" />
          </div>
        </article>
      </main>

      {/* Tab bar */}
      <footer className="relative shrink-0 border-t-2 border-[#d9ddd4] bg-[#f5f1ea] px-9 pt-4 pb-6">
        <nav className="grid grid-cols-4 rounded-[90px] border-[3px] border-[#d6ddd3] bg-white px-6 pt-[27px] pb-[27px] shadow-[0_24px_90px_rgba(22,56,43,0.1)]">
          {tabs.map((tab) => {
            const active = tab.label === activeTab;
            return (
              <button
                key={tab.label}
                type="button"
                onClick={() => setActiveTab(tab.label)}
                aria-current={active ? "page" : undefined}
                className="flex flex-col items-center"
              >
                <span
                  className={
                    active
                      ? "flex h-[120px] w-[162px] items-center justify-center rounded-[54px] bg-[#edf1ea] pb-6 text-[#16382b] shadow-[0_18px_48px_rgba(22,56,43,0.04)]"
                      : "flex h-[120px] w-[162px] items-center justify-center pb-6 text-[#828d83]"
                  }
                >
                  {tab.icon}
                </span>
                <span
                  className={
                    active
                      ? "-mt-2 text-[34px] leading-[42px] font-extrabold text-[#16382b]"
                      : "-mt-2 text-[34px] leading-[42px] font-semibold text-[#68766b]"
                  }
                >
                  {tab.label}
                </span>
              </button>
            );
          })}
        </nav>
        <div className="mx-auto mt-[82px] h-[15px] w-[462px] rounded-full bg-linear-to-b from-[#4b504b] to-[#69716a]" />
      </footer>
    </div>
  );
}
